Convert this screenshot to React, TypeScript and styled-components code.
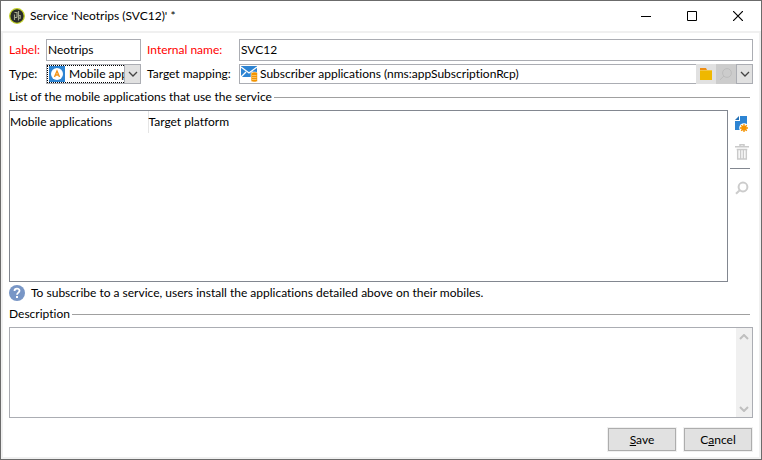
import React, { useState } from 'react';
import styled, { createGlobalStyle } from 'styled-components';

const Global = createGlobalStyle`
  * { box-sizing: border-box; }
  body { margin: 0; background: #fff; }
  body, button, input, select, textarea {
    font-family: Lato, "Open Sans", sans-serif;
    font-size: 12px;
    font-variant-ligatures: none;
    line-height: 16px;
    color: #000;
  }
`;

const Window = styled.main`
  display: flex;
  flex-direction: column;
  min-height: 100vh;
  border: 1px solid #6b6b6b;
  background: #fff;
`;

const TitleBar = styled.header`
  display: flex;
  align-items: center;
  height: 30px;
  padding-left: 8px;
`;

const Title = styled.h1`
  flex: 1;
  margin: 0 0 0 5px;
  font-size: 12px;
  font-weight: 400;
`;

const CaptionButton = styled.button`
  display: flex;
  align-items: center;
  justify-content: center;
  width: 46px;
  height: 28px;
  padding: 0;
  border: 0;
  background: none;
`;

const Client = styled.form`
  display: flex;
  flex: 1;
  flex-direction: column;
  border: 2px solid #f0f0f0;
  padding: 6px;
`;

const Fields = styled.div`
  display: grid;
  grid-template-columns: 31px 95px 86px 1fr;
  gap: 3px 6px;
  align-items: center;
`;

const FieldLabel = styled.label<{ $required?: boolean }>`
  color: ${(p) => (p.$required ? '#ff0000' : '#000')};
  white-space: nowrap;
`;

const TextInput = styled.input`
  width: 100%;
  height: 22px;
  padding: 0 1px 2px;
  border: 1px solid #abadb3;
  border-radius: 0;
  outline: 0;
`;

const Combo = styled.div`
  display: flex;
  height: 20px;
  min-width: 0;
  border: 1px solid #abadb3;
  background: #fff;
`;

const ComboValue = styled.div<{ $focused?: boolean }>`
  display: flex;
  flex: 1;
  align-items: center;
  min-width: 0;
  gap: ${(p) => (p.$focused ? '4px' : '2px')};
  padding-left: 1px;
  border: ${(p) => (p.$focused ? '1px dotted #000' : '0')};
  border-right: 0;
`;

const ComboSelect = styled.select`
  flex: 1;
  min-width: 0;
  height: 16px;
  padding: 0;
  border: 0;
  outline: 0;
  appearance: none;
  background: none;
  text-overflow: clip;
`;

const ComboInput = styled.input`
  flex: 1;
  min-width: 0;
  height: 16px;
  padding: 0;
  border: 0;
  outline: 0;
`;

const ComboButton = styled.button<{ $tone?: 'flat' | 'disabled' }>`
  display: flex;
  align-items: center;
  justify-content: center;
  width: ${(p) => (p.$tone ? '20px' : '17px')};
  flex-shrink: 0;
  margin: ${(p) => (p.$tone ? '-1px 0' : '-1px -1px -1px 0')};
  padding: 0;
  border: ${(p) => (p.$tone ? '0' : '1px solid #abadb3')};
  background: ${(p) => (p.$tone === 'disabled' ? '#ccc' : '#e1e1e1')};
`;

const SectionTitle = styled.h2<{ $tight?: boolean }>`
  display: flex;
  align-items: center;
  gap: 2px;
  margin: ${(p) => (p.$tight ? '2px' : '5px')} 0 5px;
  padding-right: 3px;
  font-size: 12px;
  font-weight: 400;
  white-space: nowrap;
  &::after {
    content: '';
    flex: 1;
    height: 1px;
    background: #a0a0a0;
  }
`;

const ListArea = styled.div`
  display: flex;
  flex: 2 1 172px;
  gap: 2px;
`;

const ListBox = styled.div`
  flex: 1;
  border: 1px solid #828790;
`;

const AppTable = styled.table`
  width: 100%;
  border-collapse: collapse;
  table-layout: fixed;
  th {
    height: 22px;
    padding: 0;
    font-weight: 400;
    text-align: left;
  }
  th:first-child { width: 138px; }
  th + th { border-left: 1px solid #e5e5e5; }
`;

const Tools = styled.div`
  display: flex;
  flex-direction: column;
  width: 23px;
  padding-right: 3px;
`;

const ToolButton = styled.button`
  display: flex;
  align-items: center;
  justify-content: center;
  height: 28px;
  padding: 0 0 0 4px;
  border: 0;
  background: none;
`;

const Divider = styled.hr`
  width: 100%;
  height: 1px;
  margin: 2px 0 5px;
  border: 0;
  background: #828790;
`;

const Help = styled.p`
  display: flex;
  align-items: center;
  gap: 6px;
  height: 22px;
  margin: 0;
`;

const Description = styled.div`
  display: flex;
  flex: 1 1 91px;
  border: 1px solid #abadb3;
`;

const DescriptionText = styled.textarea`
  flex: 1;
  padding: 2px;
  border: 0;
  outline: 0;
  resize: none;
`;

const ScrollBar = styled.div`
  display: flex;
  flex-direction: column;
  justify-content: space-between;
  width: 16px;
  background: #f0f0f0;
`;

const ScrollButton = styled.button`
  display: flex;
  align-items: center;
  justify-content: center;
  height: 17px;
  padding: 0;
  border: 0;
  background: none;
`;

const Actions = styled.footer`
  display: flex;
  justify-content: flex-end;
  gap: 8px;
  padding: 10px 1px 0 0;
`;

const PushButton = styled.button`
  width: 68px;
  height: 23px;
  padding: 0;
  border: 1px solid #adadad;
  background: #e1e1e1;
  outline: 1px solid #f0f0f0;
`;

const AppLogo = () => (
  <svg width="16" height="16" viewBox="0 0 16 16" aria-hidden="true">
    <circle cx="8" cy="8" r="7.300" fill="#2a2c2a" stroke="#c3d228" strokeWidth="1.300" />
    <path d="M5.500 12V6.500M5.500 4.500H8v5M8 9.500H6M9.500 3v9.500M9.500 7.500h1.700v2.800H9.500" fill="none" stroke="#a3a68c" strokeWidth="1.100" />
  </svg>
);

const Chevron = ({ up = false, color = '#444', width = 1.3 }) => (
  <svg width="10" height="6" viewBox="0 0 10 6" aria-hidden="true">
    <path d={up ? 'M1 5l4-4 4 4' : 'M1 1l4 4 4-4'} fill="none" stroke={color} strokeWidth={width} />
  </svg>
);

const MobileIcon = () => (
  <svg width="16" height="16" viewBox="0 0 16 16" aria-hidden="true">
    <path fill="#2d84d3" d="M0 0h16v16H0z" />
    <circle cx="8" cy="8" r="6" fill="#fff" />
    <path d="M5.500 11L8 5l2.500 6M6.500 9h3" fill="none" stroke="#f39317" strokeWidth="1.400" />
  </svg>
);

const MappingIcon = () => (
  <svg width="17" height="16" viewBox="0 0 17 16" aria-hidden="true">
    <path fill="#2d84d3" d="M0 0h16v11H0z" />
    <path d="M0 1l8 6 8-6M0 11l5-5M16 11l-5-5" fill="none" stroke="#fff" strokeWidth="1.300" />
    <path d="M10 7.500c0-2 6.500-2 6.500 0v7c0 2-6.500 2-6.500 0z" fill="#f29400" stroke="#fff" strokeWidth=".6" />
    <path d="M11 9.500h4.500M11 11.500h4.500M11 13.500h4.500" stroke="#ffd38a" strokeWidth=".7" />
  </svg>
);

const FolderIcon = () => (
  <svg width="12" height="12" viewBox="0 0 12 12" aria-hidden="true">
    <path fill="#ee8e12" d="M0 0h6l1 2H0z" />
    <path fill="#f7d488" d="M0 2h12v1H0z" />
    <path fill="#efb800" d="M0 2.500h12V12H0z" />
  </svg>
);

const SearchIcon = ({ color = '#cccccc', stroke = 2 }) => (
  <svg width="14" height="14" viewBox="0 0 14 14" aria-hidden="true">
    <circle cx="8" cy="6" r="4.400" fill="none" stroke={color} strokeWidth={stroke} />
    <path d="M5 9l-4 3.800" stroke={color} strokeWidth={stroke} />
  </svg>
);

const NewIcon = () => (
  <svg width="14" height="16" viewBox="0 0 14 16" aria-hidden="true">
    <path fill="#2d84d3" d="M5 0h7v14H0V5h5z" />
    <path fill="#2471b5" d="M4 0v4H0z" />
    <circle cx="9" cy="12" r="4.800" fill="#fff" />
    <path stroke="#f39200" strokeWidth="1.300" d="M9 8v8M5 12h8M6.200 9.200l5.600 5.600M11.800 9.200l-5.600 5.600" />
    <circle cx="9" cy="12" r="2.600" fill="#f39200" />
  </svg>
);

const TrashIcon = () => (
  <svg width="14" height="16" viewBox="0 0 14 16" aria-hidden="true">
    <path d="M5 2V.7h4V2M0 2.700h14M1.700 5.500h10.600M2.700 5v10h8.600V5M5.600 6v9M8.400 6v9" fill="none" stroke="#cacaca" strokeWidth="1.500" />
  </svg>
);

const HelpIcon = () => (
  <svg width="16" height="16" viewBox="0 0 16 16" aria-hidden="true">
    <circle cx="8" cy="8" r="8" fill="#7896c6" />
    <path d="M5.500 6C5.500 2.800 10.500 2.900 10.500 5.800 10.500 7.500 8 7.700 8 9.800" fill="none" stroke="#fff" strokeWidth="1.800" />
    <path fill="#fff" d="M7 11h2v2H7z" />
  </svg>
);

export default function App() {
  const [label, setLabel] = useState('Neotrips');
  const [name, setName] = useState('SVC12');
  const [mapping, setMapping] = useState('Subscriber applications (nms:appSubscriptionRcp)');
  return (
    <>
      <Global />
      <Window>
        <TitleBar>
          <AppLogo />
          <Title>Service 'Neotrips (SVC12)' *</Title>
          <CaptionButton aria-label="Minimize">
            <svg width="10" height="10"><path d="M0 5.500h10" stroke="#000" /></svg>
          </CaptionButton>
          <CaptionButton aria-label="Maximize">
            <svg width="10" height="10"><path d="M.5.5h9v9h-9z" fill="none" stroke="#000" /></svg>
          </CaptionButton>
          <CaptionButton aria-label="Close">
            <svg width="10" height="10"><path d="M0 0l10 10M10 0L0 10" stroke="#000" strokeWidth="1.200" /></svg>
          </CaptionButton>
        </TitleBar>
        <Client onSubmit={(e) => e.preventDefault()}>
          <Fields>
            <FieldLabel $required htmlFor="label">Label:</FieldLabel>
            <TextInput id="label" value={label} onChange={(e) => setLabel(e.target.value)} />
            <FieldLabel $required htmlFor="name">Internal name:</FieldLabel>
            <TextInput id="name" value={name} onChange={(e) => setName(e.target.value)} />
            <FieldLabel htmlFor="type">Type:</FieldLabel>
            <Combo>
              <ComboValue $focused>
                <MobileIcon />
                <ComboSelect id="type"><option>Mobile application</option></ComboSelect>
              </ComboValue>
              <ComboButton type="button" aria-label="Show types"><Chevron /></ComboButton>
            </Combo>
            <FieldLabel htmlFor="mapping">Target mapping:</FieldLabel>
            <Combo>
              <ComboValue>
                <MappingIcon />
                <ComboInput id="mapping" value={mapping} onChange={(e) => setMapping(e.target.value)} />
              </ComboValue>
              <ComboButton type="button" $tone="flat" aria-label="Choose mapping"><FolderIcon /></ComboButton>
              <ComboButton type="button" $tone="disabled" disabled aria-label="Open mapping">
                <SearchIcon color="#bdbdbd" stroke={1} />
              </ComboButton>
              <ComboButton type="button" aria-label="Show mappings"><Chevron /></ComboButton>
            </Combo>
          </Fields>
          <SectionTitle>List of the mobile applications that use the service</SectionTitle>
          <ListArea>
            <ListBox>
              <AppTable>
                <thead><tr><th scope="col">Mobile applications</th><th scope="col">Target platform</th></tr></thead>
                <tbody />
              </AppTable>
            </ListBox>
            <Tools>
              <ToolButton type="button" aria-label="Add"><NewIcon /></ToolButton>
              <ToolButton type="button" disabled aria-label="Delete"><TrashIcon /></ToolButton>
              <Divider />
              <ToolButton type="button" disabled aria-label="Detail"><SearchIcon /></ToolButton>
            </Tools>
          </ListArea>
          <Help><HelpIcon />To subscribe to a service, users install the applications detailed above on their mobiles.</Help>
          <SectionTitle as="label" $tight htmlFor="description">Description</SectionTitle>
          <Description>
            <DescriptionText id="description" />
            <ScrollBar>
              <ScrollButton type="button" aria-label="Scroll up"><Chevron up color="#bfbfbf" width={2} /></ScrollButton>
              <ScrollButton type="button" aria-label="Scroll down"><Chevron color="#bfbfbf" width={2} /></ScrollButton>
            </ScrollBar>
          </Description>
          <Actions>
            <PushButton type="submit"><u>S</u>ave</PushButton>
            <PushButton type="button">C<u>a</u>ncel</PushButton>
          </Actions>
        </Client>
      </Window>
    </>
  );
}
